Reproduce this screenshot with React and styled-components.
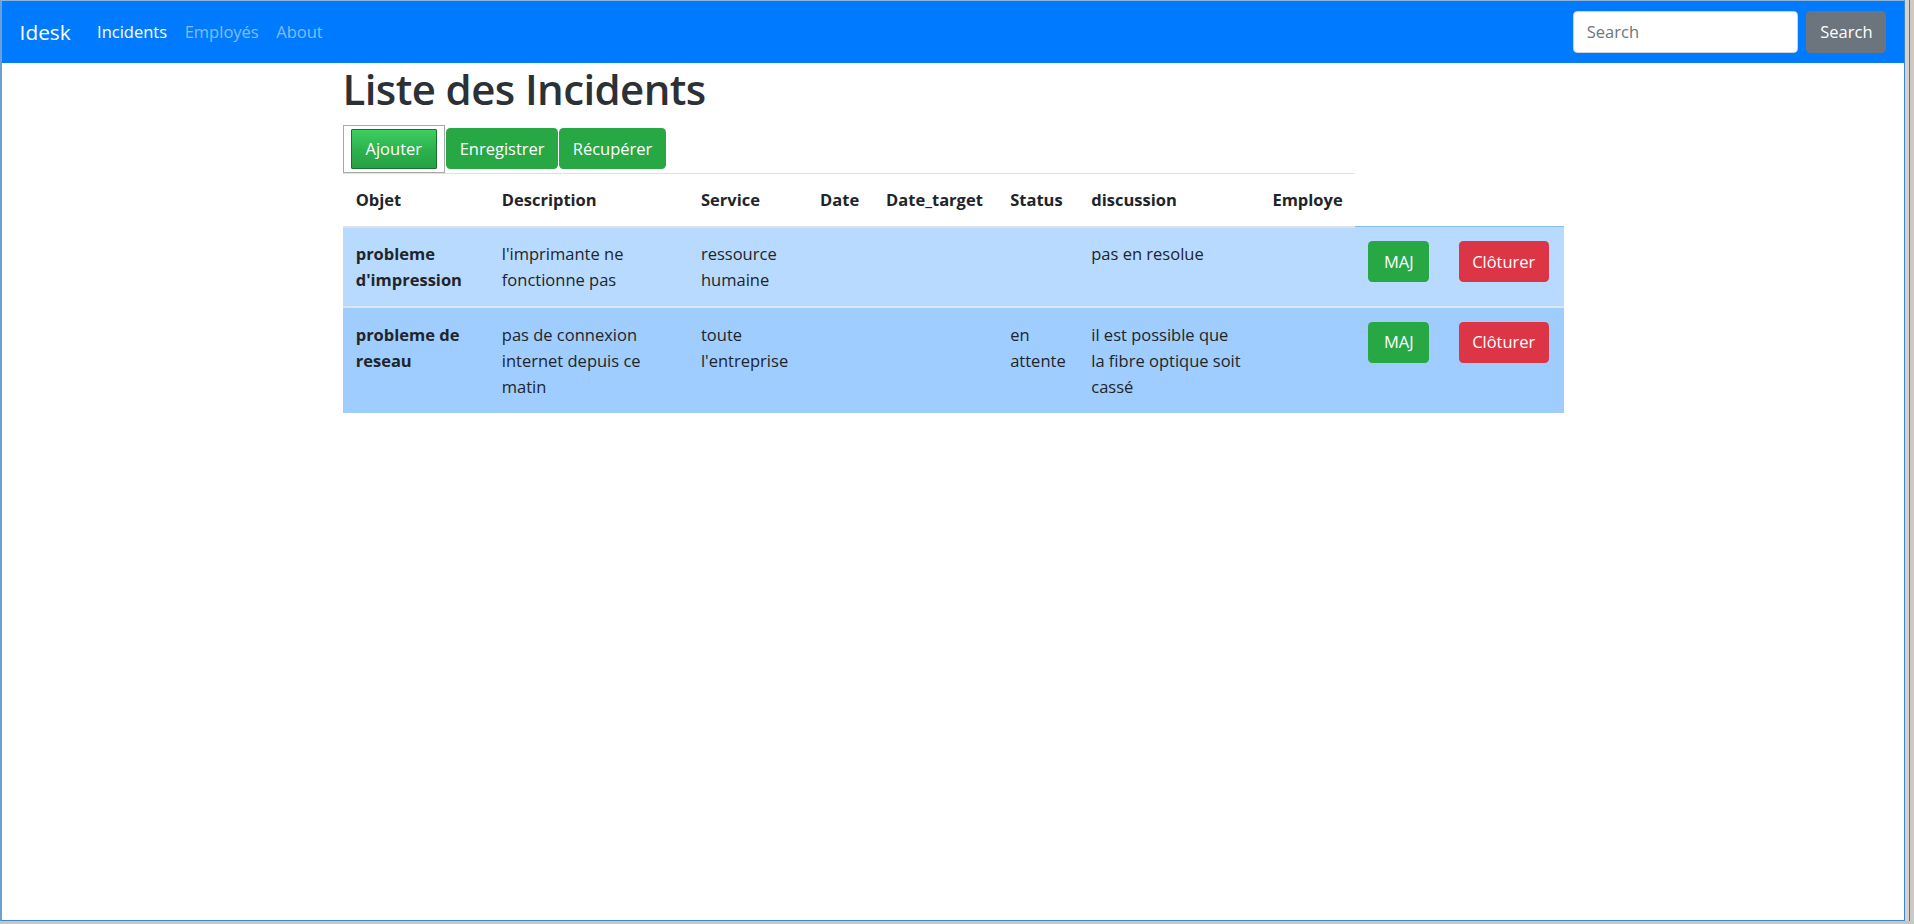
import React from "react";
import styled, { createGlobalStyle } from "styled-components";

const GlobalStyle = createGlobalStyle`
  html, body {
    margin: 0;
    padding: 0;
    background: #c9c6c2;
  }
  body {
    font-family: "Open Sans", "Noto Sans", "Liberation Sans", sans-serif;
    font-size: 16.5px;
    line-height: 26px;
    color: #212529;
  }
  * {
    box-sizing: border-box;
  }
`;

const Desktop = styled.div`
  display: flex;
  height: 924px;
  padding: 0 0 3px 0;
  background: #c9c6c2;
`;

const Window = styled.div`
  flex: 1;
  display: flex;
  flex-direction: column;
  background: #fff;
  border: 1px solid #3d86d2;
  border-top-color: #8fb3d6;
  border-left-width: 2px;
  border-left-color: #6d9fd2;
`;

const SideStrip = styled.div`
  width: 9px;
  background: linear-gradient(90deg, #d6d2cd 0 4px, #6e6a66 4px 5px, #cdc9c4 5px);
`;

const Navbar = styled.nav`
  display: flex;
  align-items: center;
  height: 62px;
  padding: 0 17.6px;
  background: #007bff;
`;

const Brand = styled.a`
  font-size: 20.8px;
  color: #fff;
  margin-right: 17.6px;
  text-decoration: none;
`;

const NavLink = styled.a`
  padding: 0 8.8px;
  color: ${(p) => (p.$active ? "#fff" : "rgba(255, 255, 255, 0.5)")};
  text-decoration: none;
`;

const SearchForm = styled.form`
  display: flex;
  align-items: center;
  margin-left: auto;
  gap: 8.8px;
`;

const SearchInput = styled.input`
  width: 225px;
  height: 41.8px;
  padding: 0 13.2px;
  border: 1px solid #ced4da;
  border-radius: 4.4px;
  font: inherit;
  color: #495057;
  &::placeholder {
    color: #6c757d;
  }
`;

const SearchButton = styled.button`
  width: 80px;
  height: 41.8px;
  border: none;
  border-radius: 4.4px;
  background: #6c757d;
  color: #fff;
  font: inherit;
`;

const Container = styled.main`
  width: 1254px;
  margin: 0 auto;
  padding: 0 16.5px;
`;

const Title = styled.h1`
  margin: 0 0 8.8px;
  font-size: 42px;
  line-height: 52.8px;
  font-weight: 600;
  letter-spacing: -0.6px;
  color: #2c3136;
`;

const Toolbar = styled.div`
  display: flex;
  align-items: center;
  gap: 1px;
`;

const FocusFrame = styled.div`
  display: flex;
  padding: 3px 7px;
  border: 1px solid #a9a9a9;
  background: #fff;
`;

const Button = styled.button`
  height: ${(p) => (p.$pressed ? "40px" : "41.8px")};
  padding: 0 ${(p) => (p.$pressed ? "14px" : p.$wide ? "15.5px" : "13.6px")};
  border: ${(p) => (p.$pressed ? "1px solid #1d6e31" : "none")};
  border-radius: ${(p) => (p.$pressed ? "1px" : "4.4px")};
  background: ${(p) =>
    p.$pressed
      ? "linear-gradient(180deg, #3dcf62 0%, #2bb14c 55%, #26a244 100%)"
      : p.$tone === "danger"
      ? "#dc3545"
      : "#28a745"};
  color: #fff;
  font: inherit;
  cursor: pointer;
`;

const Table = styled.table`
  width: 100%;
  border-collapse: collapse;
  table-layout: fixed;
`;

const HeadCell = styled.th`
  padding: 13.2px;
  text-align: left;
  vertical-align: bottom;
  font-weight: 700;
  border-top: 1px solid #dee2e6;
  border-bottom: 2.2px solid #dee2e6;
`;

const Row = styled.tr`
  background: ${(p) => (p.$tone === "dark" ? "#9fcdff" : "#b8daff")};
`;

const Cell = styled.td`
  padding: 13.2px;
  vertical-align: top;
  white-space: nowrap;
  font-weight: ${(p) => (p.$bold ? 700 : 400)};
  border-top: ${(p) => (p.$first ? "1px solid #86bbf3" : "2px solid #dfe5ec")};
`;

const Line = styled.div``;

const columns = [146, 199, 119, 66, 124, 81, 181, 96, 90, 118];
const headers = ["Objet", "Description", "Service", "Date", "Date_target", "Status", "discussion", "Employe"];

// each text field holds its lines as they wrap in the table
const incidents = [
  {
    objet: ["probleme", "d'impression"],
    description: ["l'imprimante ne", "fonctionne pas"],
    service: ["ressource", "humaine"],
    date: [],
    target: [],
    status: [],
    discussion: ["pas en resolue"],
    employe: [],
  },
  {
    objet: ["probleme de", "reseau"],
    description: ["pas de connexion", "internet depuis ce", "matin"],
    service: ["toute", "l'entreprise"],
    date: [],
    target: [],
    status: ["en", "attente"],
    discussion: ["il est possible que", "la fibre optique soit", "cassé"],
    employe: [],
  },
];

const fields = ["objet", "description", "service", "date", "target", "status", "discussion", "employe"];

export default function App() {
  return (
    <>
      <GlobalStyle />
      <Desktop>
        <Window>
          <Navbar>
            <Brand href="#">Idesk</Brand>
            <NavLink $active href="#">Incidents</NavLink>
            <NavLink href="#">Employés</NavLink>
            <NavLink href="#">About</NavLink>
            <SearchForm onSubmit={(e) => e.preventDefault()}>
              <SearchInput type="search" placeholder="Search" />
              <SearchButton type="submit">Search</SearchButton>
            </SearchForm>
          </Navbar>
          <Container>
            <Title>Liste des Incidents</Title>
            <Toolbar>
              <FocusFrame>
                <Button $pressed>Ajouter</Button>
              </FocusFrame>
              <Button>Enregistrer</Button>
              <Button>Récupérer</Button>
            </Toolbar>
            <Table>
              <colgroup>
                {columns.map((w, i) => (
                  <col key={i} style={{ width: w }} />
                ))}
              </colgroup>
              <thead>
                <tr>
                  {headers.map((h) => (
                    <HeadCell key={h}>{h}</HeadCell>
                  ))}
                </tr>
              </thead>
              <tbody>
                {incidents.map((r, i) => (
                  <Row key={i} $tone={i % 2 ? "dark" : "light"}>
                    {fields.map((f) => (
                      <Cell key={f} $first={i === 0} $bold={f === "objet"}>
                        {r[f].map((l) => (
                          <Line key={l}>{l}</Line>
                        ))}
                      </Cell>
                    ))}
                    <Cell $first={i === 0}>
                      <Button $wide>MAJ</Button>
                    </Cell>
                    <Cell $first={i === 0}>
                      <Button $tone="danger">Clôturer</Button>
                    </Cell>
                  </Row>
                ))}
              </tbody>
            </Table>
          </Container>
        </Window>
        <SideStrip />
      </Desktop>
    </>
  );
}
